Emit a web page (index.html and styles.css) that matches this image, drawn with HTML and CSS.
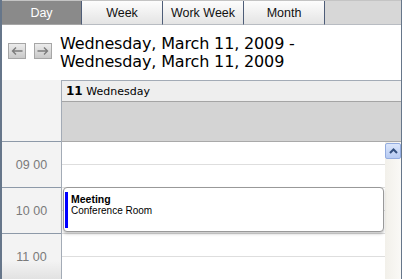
FILE: index.html
```html
<!DOCTYPE html>
<html lang="en">
  <head>
    <meta charset="UTF-8" />
    <meta name="viewport" content="width=device-width, initial-scale=1.0" />
    <title>Day View</title>
    <link rel="stylesheet" href="styles.css">
  </head>
  <body>
    <div class="scheduler">
      <!-- View switcher -->
      <nav class="tabs">
        <div class="tab active">Day</div>
        <div class="tab">Week</div>
        <div class="tab">Work Week</div>
        <div class="tab">Month</div>
        <div class="tab-fill"></div>
      </nav>

      <!-- Navigation + date range -->
      <div class="toolbar">
        <div class="nav-buttons">
          <button class="nav-btn" aria-label="Previous">
            <svg width="12" height="10" viewBox="0 0 12 10"><path d="M1.5 5h10M5 1.5L1.5 5 5 8.5" fill="none" stroke="#7c7c7c" stroke-width="1.4"/></svg>
          </button>
          <button class="nav-btn" aria-label="Next">
            <svg width="12" height="10" viewBox="0 0 12 10"><path d="M0.5 5h10M7 1.5L10.5 5 7 8.5" fill="none" stroke="#7c7c7c" stroke-width="1.4"/></svg>
          </button>
        </div>
        <h1 class="range">Wednesday, March 11, 2009 -<br>Wednesday, March 11, 2009</h1>
      </div>

      <!-- Day grid -->
      <div class="calendar">
        <div class="times">
          <div class="corner"></div>
          <div class="hour">09 00</div>
          <div class="hour">10 00</div>
          <div class="hour">11 00</div>
        </div>
        <div class="day">
          <div class="day-header"><b>11</b> Wednesday</div>
          <div class="all-day"></div>
          <div class="day-body">
            <div class="slots">
              <div class="slot"></div>
              <div class="slot"></div>
              <div class="slot"></div>
              <div class="slot"></div>
              <div class="slot"></div>
              <div class="slot"></div>
              <div class="appointment">
                <span class="appt-bar"></span>
                <div class="appt-text">
                  <strong>Meeting</strong>
                  <span>Conference Room</span>
                </div>
              </div>
            </div>
            <div class="scrollbar">
              <div class="scroll-up">
                <svg width="9" height="6" viewBox="0 0 9 6"><path d="M1 5l3.5-3.5L8 5" fill="none" stroke="#34507f" stroke-width="2"/></svg>
              </div>
            </div>
          </div>
        </div>
      </div>
    </div>
  </body>
</html>
```

FILE: styles.css
```css
/* ====================== RESET ====================== */
* {
  margin: 0;
  padding: 0;
  box-sizing: border-box;
}
body {
  font-family: "Liberation Sans", Arial, sans-serif;
  background: #fff;
  color: #000;
}

/* ====================== FRAME ====================== */
.scheduler {
  width: 402px;
  height: 279px;
  overflow: hidden;
  border-left: 2px solid #66768a;
  border-right: 1px solid #66768a;
  display: flex;
  flex-direction: column;
}

/* ====================== TABS ====================== */
.tabs {
  display: flex;
  height: 25px;
  flex-shrink: 0;
  border-top: 1px solid #c4c4c4;
}
.tab {
  width: 81px;
  display: flex;
  align-items: center;
  justify-content: center;
  font-size: 12.5px;
  color: #111;
  background: linear-gradient(180deg, #fdfdfd, #e4e4e4);
  border-right: 1px solid #4e5d78;
  border-bottom: 1px solid #b8bcc2;
}
.tab:first-child {
  width: 80px;
}
.tab.active {
  background: #8a8a8a;
  color: #fff;
  border-bottom-color: #a6a6a6;
}
.tab-fill {
  flex: 1;
  background: #d7d7d7;
  border-bottom: 1px solid #b8bcc2;
}

/* ====================== TOOLBAR ====================== */
.toolbar {
  height: 55px;
  flex-shrink: 0;
  display: flex;
  padding: 10px 0 0 6px;
}
.nav-buttons {
  display: flex;
  gap: 8px;
  width: 52px;
  margin-top: 8px;
}
.nav-btn {
  width: 18px;
  height: 16px;
  border: 1px solid #a6a6a6;
  background: linear-gradient(180deg, #ececec, #c9c9c9);
  display: flex;
  align-items: center;
  justify-content: center;
}
.range {
  font-family: "DejaVu Sans", Verdana, sans-serif;
  font-weight: normal;
  font-size: 16px;
  line-height: 18px;
  letter-spacing: -0.15px;
  color: #000;
}

/* ====================== GRID ====================== */
.calendar {
  flex: 1;
  display: flex;
  min-height: 0;
}
.times {
  width: 59px;
  flex-shrink: 0;
  background: #f3f3f3;
}
.corner {
  height: 62px;
  border-bottom: 1px solid #8d99a8;
}
.hour {
  height: 46px;
  border-bottom: 1px solid #8d99a8;
  display: flex;
  align-items: center;
  justify-content: center;
  font-size: 12.5px;
  color: #7a7a7a;
}
.hour:last-child {
  background: linear-gradient(180deg, #f3f3f3 60%, #e2e2e2);
}
.day {
  flex: 1;
  display: flex;
  flex-direction: column;
  border-left: 1px solid #a3abb6;
}
.day-header {
  height: 22px;
  background: #eeeeee;
  border-top: 1px solid #a3abb6;
  border-bottom: 1px solid #a5a5a5;
  padding: 3px 0 0 4px;
  font-family: "DejaVu Sans", Verdana, sans-serif;
  font-size: 11px;
}
.day-header b {
  font-size: 12px;
}
.all-day {
  height: 40px;
  background: #d4d4d4;
  border-bottom: 1px solid #a9a9a9;
}
.day-body {
  flex: 1;
  display: flex;
  min-height: 0;
}
.slots {
  flex: 1;
  position: relative;
}
.slot {
  height: 23px;
  border-bottom: 1px solid #dedede;
}

/* ====================== APPOINTMENT ====================== */
.appointment {
  position: absolute;
  top: 45px;
  left: 1px;
  right: 1px;
  height: 45px;
  background: #fff;
  border: 1px solid #999;
  border-radius: 4px;
  box-shadow: 0 2px 3px rgba(0, 0, 0, 0.22);
  display: flex;
  padding: 4px 0 0 1px;
}
.appt-bar {
  width: 3px;
  height: 36px;
  background: #0000ff;
  flex-shrink: 0;
}
.appt-text {
  display: flex;
  flex-direction: column;
  padding: 1px 0 0 3px;
  font-size: 10px;
  line-height: 12px;
}
.appt-text strong {
  font-size: 10.5px;
}

/* ====================== SCROLLBAR ====================== */
.scrollbar {
  width: 16px;
  background: linear-gradient(90deg, #f2f0ea, #faf9f6);
}
.scroll-up {
  height: 16px;
  margin-top: 1px;
  border: 1px solid #93ace0;
  border-radius: 2px;
  background: linear-gradient(180deg, #dbe6fb, #b6caf2);
  display: flex;
  align-items: center;
  justify-content: center;
}
```
